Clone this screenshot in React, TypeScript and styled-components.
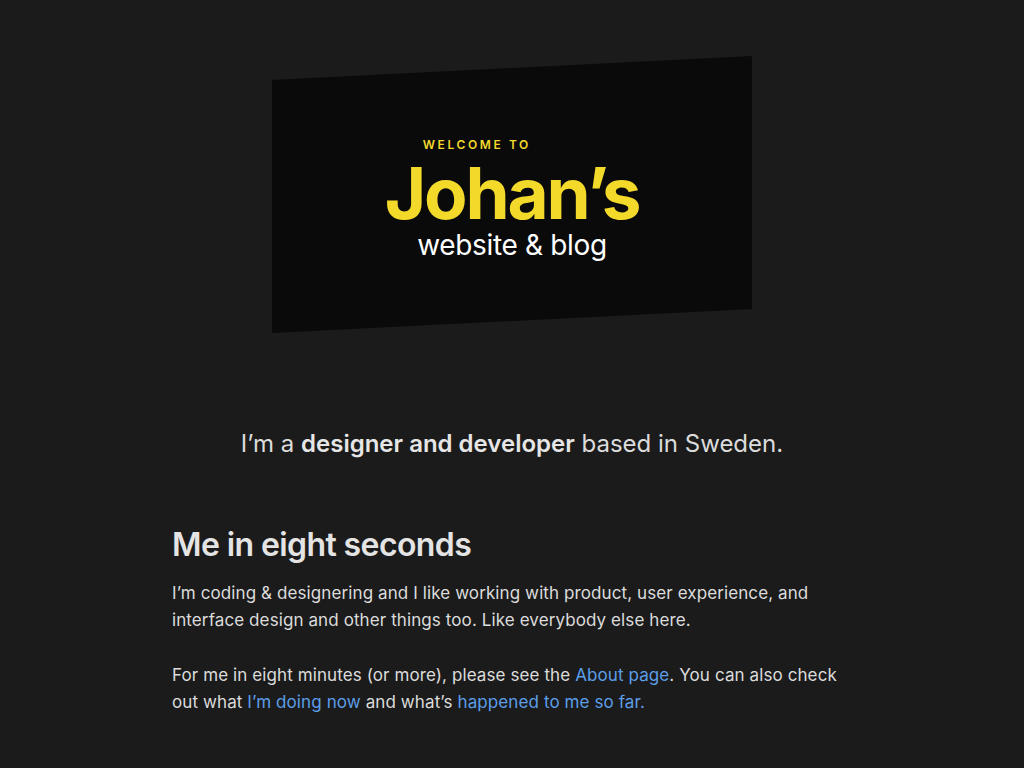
import React from 'react';
import styled, { createGlobalStyle } from 'styled-components';

const GlobalStyle = createGlobalStyle`
    html, body {
        margin: 0;
        padding: 0;
        background: #1b1b1b;
        color: #e2e2e2;
        font-family: Inter, "Noto Sans", sans-serif;
        -webkit-font-smoothing: antialiased;
    }
`;

const Page = styled.main`
    min-height: 768px;
    display: flex;
    flex-direction: column;
    align-items: center;
`;

const Hero = styled.header`
    position: relative;
    margin-top: 68px;
    width: 480px;
    height: 253px;
    display: flex;
    flex-direction: column;
    align-items: center;
    justify-content: center;
    padding-top: 10px;
    box-sizing: border-box;

    &::before {
        content: '';
        position: absolute;
        inset: 0;
        background: #0a0a0a;
        transform: skewY(-2.86deg);
        z-index: 0;
    }
`;

const HeroInner = styled.div`
    position: relative;
    z-index: 1;
    display: flex;
    flex-direction: column;
    align-items: center;
`;

const Kicker = styled.span`
    align-self: flex-start;
    margin-left: 38px;
    font-size: 12px;
    font-weight: 600;
    letter-spacing: 2.6px;
    color: #f2d92a;
    line-height: 14px;
`;

const Title = styled.h1`
    margin: 4px 0 0;
    font-size: 71px;
    font-weight: 700;
    letter-spacing: -2.2px;
    line-height: 74px;
    color: #f2d92a;
`;

const Subtitle = styled.span`
    margin-top: -2px;
    font-size: 28px;
    font-weight: 400;
    letter-spacing: -0.35px;
    line-height: 34px;
    color: #ffffff;
`;

const Intro = styled.p`
    margin: 107px 0 0;
    font-size: 24px;
    line-height: 32px;
    color: #dcdcdc;
    text-align: center;

    strong {
        font-weight: 600;
        color: #e6e6e6;
    }
`;

const Section = styled.section`
    width: 680px;
    margin-top: 66px;
`;

const Heading = styled.h2`
    margin: 0 0 16px;
    font-size: 32px;
    font-weight: 600;
    letter-spacing: -0.6px;
    line-height: 38px;
    color: #e4e4e4;
`;

const Text = styled.p`
    margin: 0 0 28px;
    font-size: 17px;
    line-height: 27px;
    letter-spacing: 0.1px;
    color: #dcdcdc;
`;

const Link = styled.a`
    color: #5c9ee8;
    text-decoration: none;
`;

export default function App() {
    return (
        <>
            <GlobalStyle />
            <Page>
                <Hero>
                    <HeroInner>
                        <Kicker>WELCOME TO</Kicker>
                        <Title>Johan’s</Title>
                        <Subtitle>website &amp; blog</Subtitle>
                    </HeroInner>
                </Hero>
                <Intro>
                    I’m a <strong>designer and developer</strong> based in Sweden.
                </Intro>
                <Section>
                    <Heading>Me in eight seconds</Heading>
                    <Text>
                        I’m coding &amp; designering and I like working with product, user experience, and
                        interface design and other things too. Like everybody else here.
                    </Text>
                    <Text>
                        For me in eight minutes (or more), please see the <Link href="#">About page</Link>. You
                        can also check out what <Link href="#">I’m doing now</Link> and what’s{' '}
                        <Link href="#">happened to me so far.</Link>
                    </Text>
                </Section>
            </Page>
        </>
    );
}
